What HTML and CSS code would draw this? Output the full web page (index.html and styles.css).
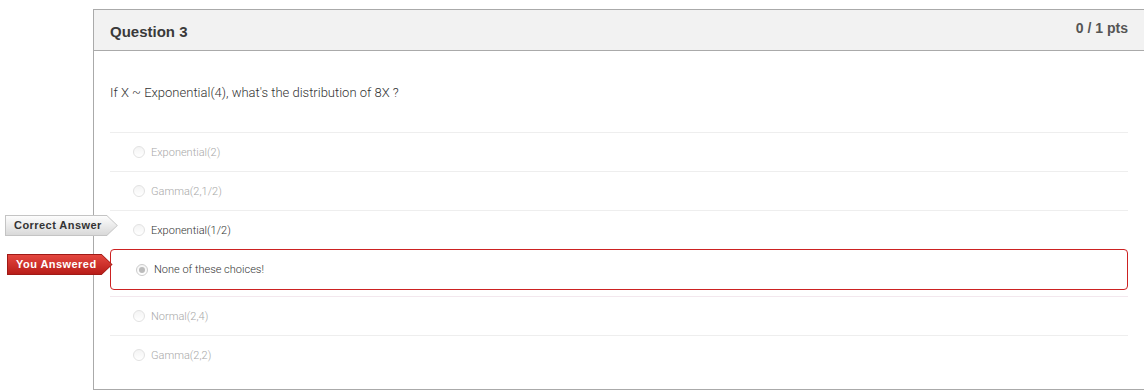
FILE: index.html
```html
<!DOCTYPE html>
<html lang="en">
<head>
    <meta charset="UTF-8">
    <title>Question 3</title>
    <link rel="stylesheet" href="styles.css">
</head>
<body>
    <div class="question">
        <div class="question-header">
            <span class="question-title">Question 3</span>
            <span class="question-points">0 / 1 pts</span>
        </div>

        <div class="question-body">
            <p class="question-text">If X ~ Exponential(4), what's the distribution of 8X ?</p>

            <div class="answers">
                <div class="answer">
                    <span class="radio"></span>
                    <span class="answer-text">Exponential(2)</span>
                </div>
                <div class="answer">
                    <span class="radio"></span>
                    <span class="answer-text">Gamma(2,1/2)</span>
                </div>
                <div class="answer correct">
                    <span class="answer-label label-correct"><span>Correct Answer</span></span>
                    <span class="radio"></span>
                    <span class="answer-text">Exponential(1/2)</span>
                </div>
                <div class="answer selected">
                    <span class="answer-label label-wrong"><span>You Answered</span></span>
                    <span class="radio checked"></span>
                    <span class="answer-text">None of these choices!</span>
                </div>
                <div class="answer">
                    <span class="radio"></span>
                    <span class="answer-text">Normal(2,4)</span>
                </div>
                <div class="answer">
                    <span class="radio"></span>
                    <span class="answer-text">Gamma(2,2)</span>
                </div>
            </div>
        </div>
    </div>
</body>
</html>
```

FILE: styles.css
```css
body {
    margin: 0;
    overflow: hidden;
    background-color: white;
    font-family: Roboto, "Liberation Sans", Arial, sans-serif;
    color: #333;
}
.question {
    margin: 9px 0 0 93px;
    width: 1050px;
    border: 1px solid #aaa;
}
.question-header {
    display: flex;
    justify-content: space-between;
    align-items: flex-start;
    height: 40px;
    padding: 0 16px;
    background-color: #f2f2f2;
    border-bottom: 1px solid #aaa;
    font-family: "Liberation Sans", Arial, sans-serif;
    font-weight: bold;
    color: #3a3a3a;
}
.question-title {
    font-size: 15px;
    line-height: 20px;
    margin-top: 12px;
}
.question-points {
    font-size: 14px;
    line-height: 20px;
    margin-top: 8px;
    color: #555;
}
.question-body {
    padding: 32px 16px 15px;
}
.question-text {
    margin: 0 0 29px;
    font-size: 13px;
    font-weight: 300;
    line-height: 20px;
    color: #333;
}
.answer {
    position: relative;
    display: flex;
    align-items: center;
    height: 38px;
    border-top: 1px solid #eee;
    font-size: 11px;
    font-weight: 300;
    color: #a8a8a8;
}
.radio {
    width: 10px;
    height: 10px;
    margin: 0 6px 0 23px;
    border: 1px solid #e2e2e2;
    border-radius: 50%;
    background: linear-gradient(#f4f4f4, #fff);
    box-sizing: content-box;
}
.radio.checked {
    position: relative;
    border-color: #ccc;
}
.radio.checked::after {
    content: "";
    position: absolute;
    left: 2px;
    top: 2px;
    width: 6px;
    height: 6px;
    border-radius: 50%;
    background-color: #bbb;
}
.answer.correct {
    color: #333;
}
.answer.selected {
    height: 39px;
    margin-bottom: 6px;
    border: 1px solid #cc2222;
    border-radius: 4px;
    color: #333;
}
.answer.selected .radio {
    margin-left: 25px;
}
.answer.selected + .answer {
    border-top-color: #f3e8ee;
}

/* seta ao lado da resposta */
.answer-label {
    position: absolute;
    top: 4px;
    height: 21px;
    padding: 1px;
    box-sizing: border-box;
    font-family: "Liberation Sans", Arial, sans-serif;
    font-size: 11px;
    font-weight: bold;
    clip-path: polygon(0 0, calc(100% - 11px) 0, 100% 50%, calc(100% - 11px) 100%, 0 100%);
}
.answer-label span {
    display: block;
    height: 19px;
    line-height: 19px;
    padding: 0 15px 0 8px;
    letter-spacing: 0.45px;
    clip-path: polygon(0 0, calc(100% - 10px) 0, 100% 50%, calc(100% - 10px) 100%, 0 100%);
}
.label-correct {
    left: -105px;
    background-color: #c4c4c4;
    color: #333;
}
.label-correct span {
    background: linear-gradient(#fdfdfd, #d9d9d9);
}
.label-wrong {
    left: -104px;
    top: 4px;
    background-color: #a01a16;
    color: white;
}
.label-wrong span {
    background: linear-gradient(#e4473f, #b81d19);
}
```
